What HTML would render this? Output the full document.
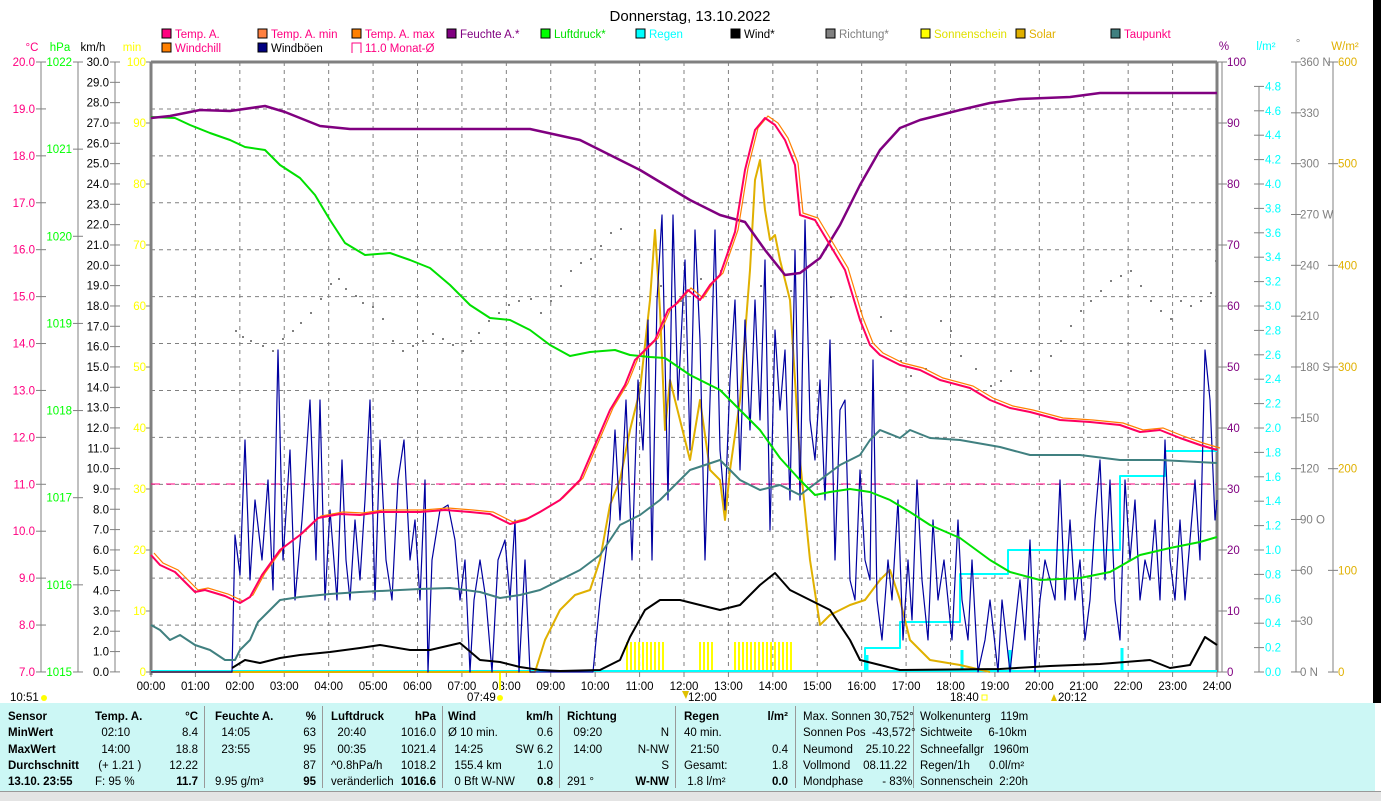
<!DOCTYPE html>
<html><head><meta charset="utf-8">
<style>
html,body{margin:0;padding:0;background:#fff;width:1381px;height:800px;overflow:hidden;font-family:"Liberation Sans",sans-serif}
svg{position:absolute;left:0;top:0}
text{font-family:"Liberation Sans",sans-serif;font-size:11.5px}
.tb{position:absolute;left:0;top:703px;width:1375px;height:88px;background:#ccf7f5}
.c{position:absolute;top:6px;font-size:11.5px;line-height:16.3px;color:#000;white-space:pre}
.sep{position:absolute;top:3px;width:1px;height:82px;background:#999}
.r{text-align:right}
b{font-weight:bold}
</style></head><body>
<svg id="s" width="1381" height="800" viewBox="0 0 1381 800"></svg>
<div class="tb">
 <div class="c" style="left:8px"><b>Sensor
MinWert
MaxWert
Durchschnitt
13.10. 23:55</b></div>
 <div class="sep" style="left:204px"></div>
 <div class="c" style="left:95px"><b>Temp. A.</b>
  02:10
  14:00
 (+ 1.21 )
F: 95 %</div>
 <div class="c r" style="left:160px;width:38px"><b>°C</b>
8.4
18.8
12.22
<b>11.7</b></div>
 <div class="sep" style="left:322px"></div>
 <div class="c" style="left:215px"><b>Feuchte A.</b>
  14:05
  23:55

9.95 g/m³</div>
 <div class="c r" style="left:280px;width:36px"><b>%</b>
63
95
87
<b>95</b></div>
 <div class="sep" style="left:442px"></div>
 <div class="c" style="left:331px"><b>Luftdruck</b>
  20:40
  00:35
^0.8hPa/h
veränderlich</div>
 <div class="c r" style="left:390px;width:46px"><b>hPa</b>
1016.0
1021.4
1018.2
<b>1016.6</b></div>
 <div class="sep" style="left:559px"></div>
 <div class="c" style="left:448px"><b>Wind</b>
Ø 10 min.
  14:25
  155.4 km
  0 Bft W-NW</div>
 <div class="c r" style="left:500px;width:53px"><b>km/h</b>
0.6
SW 6.2
1.0
<b>0.8</b></div>
 <div class="sep" style="left:675px"></div>
 <div class="c" style="left:567px"><b>Richtung</b>
  09:20
  14:00

291 °</div>
 <div class="c r" style="left:620px;width:49px"><b>&nbsp;</b>
N
N-NW
S
<b>W-NW</b></div>
 <div class="sep" style="left:795px"></div>
 <div class="c" style="left:684px"><b>Regen</b>
40 min.
  21:50
Gesamt:
 1.8 l/m²</div>
 <div class="c r" style="left:740px;width:48px"><b>l/m²</b>

0.4
1.8
<b>0.0</b></div>
 <div class="sep" style="left:913px"></div>
 <div class="c" style="left:803px">Max. Sonnen 30,752°
Sonnen Pos  -43,572°
Neumond    25.10.22
Vollmond    08.11.22
Mondphase      - 83%</div>
 <div class="c" style="left:920px">Wolkenunterg   119m
Sichtweite     6-10km
Schneefallgr   1960m
Regen/1h      0.0l/m²
Sonnenschein  2:20h</div>
</div>
<div style="position:absolute;left:0;top:791px;width:1381px;height:9px;background:#e4e4e4;border-top:1px solid #999"></div>
<div style="position:absolute;left:1373px;top:0;width:8px;height:703px;background:#000"></div>
<script>
var s=document.getElementById('s'),NS='http://www.w3.org/2000/svg',h='';
function T(x,y,t,c,a,extra){h+='<text x="'+x+'" y="'+y+'" fill="'+c+'"'+(a?' text-anchor="'+a+'"':'')+(extra||'')+'>'+t+'</text>';}
function L(x1,y1,x2,y2,c,w,d){h+='<line x1="'+x1+'" y1="'+y1+'" x2="'+x2+'" y2="'+y2+'" stroke="'+c+'" stroke-width="'+(w||1)+'"'+(d?' stroke-dasharray="'+d+'"':'')+'/>';}
function P(pts,c,w){h+='<polyline fill="none" stroke="'+c+'" stroke-width="'+w+'" stroke-linejoin="round" points="'+pts+'"/>';}
var X0=151,X1=1217,Y0=62,Y1=672;
T(690,21,'Donnerstag, 13.10.2022','#000','middle',' style="font-size:15px"');
// grid
for(var i=1;i<24;i++){var x=X0+i*(X1-X0)/24;L(x,Y0,x,Y1,'#808080',1,'4,4');}
for(var i=1;i<13;i++){var y=Y1-i*46.92;L(X0,y,X1,y,'#808080',1,'4,4');}
L(X0,Y0,X1,Y0,'#808080',3);L(X0,Y0,X0,Y1+3,'#808080',3);L(X1,Y0,X1,Y1,'#808080',3);L(X0,Y1,X1,Y1,'#808080',1);
// left axes
T(32,51,'°C','#ff0080','middle');T(60,51,'hPa','#00ff00','middle');T(93,51,'km/h','#000','middle');T(132,51,'min','#ffff00','middle');
L(41,62,41,672,'#808080');L(78,62,78,672,'#808080');L(115,62,115,672,'#808080');
for(var i=0;i<=13;i++){var y=62+i*46.92;T(35,y+4,(20-i).toFixed(1),'#ff0080','end');L(36,y,46,y,'#808080');}
for(var i=0;i<=7;i++){var y=62+i*87.14;T(72,y+4,1022-i,'#00ff00','end');L(73,y,83,y,'#808080');}
for(var i=0;i<=30;i++){var y=62+i*20.33;T(109,y+4,(30-i).toFixed(1),'#000','end');L(110,y,120,y,'#808080');}
for(var i=0;i<=10;i++){var y=62+i*61;T(146,y+4,100-i*10,'#ffff00','end');L(146,y,151,y,'#808080');}
// right axes
T(1224,50,'%','#800080','middle');T(1266,50,'l/m²','#00ffff','middle');T(1298,47,'°','#808080','middle');T(1345,50,'W/m²','#e0b000','middle');
L(1222,62,1222,672,'#808080');L(1259,86,1259,672,'#808080');L(1296,62,1296,672,'#808080');L(1333,62,1333,672,'#808080');
for(var i=0;i<=10;i++){var y=62+i*61;T(1227,y+4,100-i*10,'#800080');L(1217,y,1227,y,'#808080');}
for(var i=0;i<=24;i++){var v=4.8-i*0.2,y=672-v*122;T(1265,y+4,Math.abs(v).toFixed(1),'#00ffff');L(1254,y,1264,y,'#808080');}
var dl=['360 N','330','300','270 W','240','210','180 S','150','120','90  O','60','30','0   N'];
for(var i=0;i<=12;i++){var y=62+i*50.83;T(1300,y+4,dl[i],'#808080');L(1291,y,1301,y,'#808080');}
for(var i=0;i<=6;i++){var y=62+i*101.67;T(1338,y+4,600-i*100,'#e0b000');L(1328,y,1338,y,'#808080');}
// x labels
for(var i=0;i<=24;i++){var x=X0+i*(X1-X0)/24;T(x,690,(i<10?'0':'')+i+':00','#000','middle');L(x,672,x,677,'#808080');}
T(10,701,'10:51','#000');h+='<circle cx="44" cy="698" r="3" fill="#ffff00"/>';
T(467,701,'07:49','#000');h+='<circle cx="500" cy="698" r="3" fill="#ffff00"/>';L(500,672,500,690,'#ffff00',2);
T(688,701,'12:00','#000');h+='<path d="M682 691 L686 699 L689 691Z" fill="#e0c000"/>';
T(950,701,'18:40','#000');h+='<rect x="982" y="695" width="5" height="5" fill="none" stroke="#ffff00"/>';
T(1058,701,'20:12','#000');h+='<path d="M1051 701 L1054 694 L1057 701Z" fill="#e0c000"/>';
// legend
var lg=[[162,38,'#ff0080','Temp. A.','#ff0080'],[258,38,'#ff8040','Temp. A. min','#ff0080'],[352,38,'#ff8000','Temp. A. max','#ff0080'],[447,38,'#800080','Feuchte A.*','#800080'],[541,38,'#00ff00','Luftdruck*','#00e000'],[636,38,'#00ffff','Regen','#00ffff'],[731,38,'#000','Wind*','#000'],[826,38,'#808080','Richtung*','#808080'],[921,38,'#ffff00','Sonnenschein','#e0e000'],[1016,38,'#e0b000','Solar','#e0b000'],[1111,38,'#408080','Taupunkt','#ff0080'],[162,52,'#ff8000','Windchill','#ff0080'],[258,52,'#000080','Windböen','#000']];
lg.forEach(function(l){h+='<rect x="'+l[0]+'" y="'+(l[1]-9)+'" width="9" height="9" fill="'+l[2]+'" stroke="#000"/>';T(l[0]+13,l[1],l[3],l[4]);});
h+='<path d="M352 53 V43 H361 V53" fill="none" stroke="#ff0080"/>';T(365,52,'11.0 Monat-Ø','#ff0080');
// month avg
L(X0,484,X1,484,'#ff0080',1,'9,6');
// direction dots
var dd=[235,330,242,336,250,340,262,345,272,350,282,338,292,330,300,322,310,312,320,298,330,283,338,278,345,288,355,295,362,302,372,306,382,318,392,340,402,350,412,345,422,340,432,333,442,338,452,344,462,350,470,340,478,332,488,320,498,312,508,304,518,300,530,298,540,312,550,300,560,285,570,270,580,262,590,258,600,245,610,232,620,228,660,285,680,300,700,278,720,270,760,285,790,290,830,296,860,310,880,316,890,330,900,360,910,375,925,368,940,320,950,330,960,355,975,368,990,385,1000,380,1010,370,1030,370,1050,355,1060,340,1070,325,1080,310,1090,300,1100,290,1110,280,1120,275,1130,270,1140,285,1150,300,1160,310,1170,318,1180,300,1190,305,1200,300,1210,292,1215,260];
for(var i=0;i<dd.length;i+=2)h+='<rect x="'+dd[i]+'" y="'+dd[i+1]+'" width="2" height="2" fill="#808080"/>';
// sunshine bars
[[627,666],[700,713],[735,791]].forEach(function(r){for(var x=r[0];x<=r[1];x+=4)L(x,642,x,672,'#ffff00',2);});
// rain
P('865,672 865,648 900,648 900,622 960,622 960,574 1008,574 1008,550 1120,550 1120,476 1165,476 1165,451 1217,451','#00ffff',2);
L(1010,650,1010,672,'#00ffff',3);L(1122,648,1122,672,'#00ffff',3);L(962,650,962,672,'#00ffff',3);L(867,655,867,672,'#00ffff',3);
L(X0,671,X1,671,'#00ffff',2);
// solar
P('151,672 535,672 545,640 560,610 575,595 590,590 600,560 610,505 620,480 630,430 640,390 650,300 655,230 660,310 665,430 670,380 680,420 690,460 700,400 710,470 720,480 725,520 730,470 740,400 750,270 755,180 760,160 765,210 770,240 775,235 780,260 790,300 800,460 810,560 820,625 830,615 850,605 865,600 880,580 890,570 900,600 910,640 930,660 960,665 990,672','#e0b000',2);
// gusts
P('151,672 232,672 235,535 240,575 245,440 250,580 255,500 262,560 268,480 273,590 278,350 283,560 290,450 295,600 302,520 310,400 316,560 320,400 325,600 330,510 337,600 342,460 346,560 350,600 355,520 360,580 365,500 370,400 375,600 380,440 386,560 392,600 398,480 404,440 410,560 415,520 420,600 425,480 428,672 432,560 440,510 448,505 455,540 460,600 465,560 470,672 474,600 480,560 486,600 492,672 498,560 505,540 510,600 515,520 519,672 525,560 530,672 593,672 600,600 610,520 615,430 620,520 626,400 632,560 638,380 643,450 648,320 652,560 657,300 662,215 668,500 673,215 678,400 685,260 690,450 695,230 700,340 705,560 710,400 715,230 720,450 725,510 730,380 735,300 740,470 745,320 750,430 755,300 760,420 765,260 770,530 775,330 780,410 785,350 790,500 795,250 800,500 805,220 810,420 815,460 820,380 825,500 830,340 835,560 840,410 845,400 850,580 855,600 860,470 865,560 870,580 873,360 877,600 882,640 888,560 892,600 898,500 903,640 908,560 912,620 917,480 922,580 928,640 933,520 938,600 944,560 948,600 952,640 958,520 962,600 968,640 972,560 978,672 985,640 990,600 998,672 1002,600 1010,672 1020,580 1025,640 1030,540 1035,672 1040,600 1045,560 1050,580 1055,600 1060,480 1065,600 1070,520 1075,600 1080,560 1085,640 1090,600 1095,520 1100,460 1105,580 1110,480 1115,600 1120,640 1125,480 1130,560 1135,500 1140,600 1145,560 1150,580 1155,520 1160,600 1165,440 1170,560 1175,600 1180,520 1185,600 1190,540 1195,480 1200,560 1205,350 1210,400 1215,520 1217,500','#0000a0',1.2);
// dew point
P('151,625 160,630 170,640 180,635 195,645 210,650 225,660 235,660 240,650 250,640 258,622 270,610 280,600 300,597 330,594 360,592 400,590 420,589 450,588 480,592 500,598 520,595 540,590 560,580 580,570 600,555 620,525 640,515 660,500 690,470 720,460 740,480 760,490 780,485 800,495 820,480 840,465 860,455 870,440 880,430 900,438 910,430 930,438 960,440 1000,447 1030,455 1080,455 1120,460 1160,460 1217,463','#408080',2);
// wind
P('232,668 245,660 260,663 280,658 300,655 330,652 360,648 380,645 410,650 430,650 460,643 480,660 500,662 520,667 540,670 560,671 600,670 620,660 630,637 645,610 660,600 680,600 700,605 720,610 740,605 760,585 775,573 790,590 810,600 830,610 850,640 860,660 880,665 900,670 1000,669 1050,666 1100,664 1150,660 1170,668 1190,665 1205,637 1217,645','#000',2);
// pressure
P('151,117 175,118 190,125 210,133 230,140 245,147 265,150 280,165 300,178 315,195 330,220 345,243 365,255 390,253 410,260 430,268 450,285 470,305 490,318 510,320 530,330 550,345 570,356 590,352 615,350 630,355 650,357 665,358 690,375 720,390 740,410 760,430 780,458 800,480 815,495 830,492 850,489 870,492 890,500 910,512 930,525 960,538 990,560 1010,572 1040,580 1080,578 1110,572 1140,555 1170,548 1200,542 1217,537','#00e000',2);
// humidity
P('151,118 170,116 200,110 230,111 265,106 285,112 300,118 320,126 350,129 450,129 530,129 580,140 610,155 640,170 665,185 690,200 720,215 745,222 765,250 785,275 800,273 820,258 840,225 860,185 880,150 900,128 920,120 960,110 990,103 1020,99 1070,97 1100,93 1217,93','#800080',2.5);
// temps
var tp='151,555 160,565 175,572 195,592 205,590 225,596 240,603 250,597 262,575 280,550 300,535 318,518 340,514 360,515 380,512 420,512 445,510 470,512 490,514 510,524 525,520 540,512 560,500 580,480 595,445 610,410 625,385 635,360 645,350 655,340 668,310 675,305 688,290 700,300 710,285 720,275 735,232 745,170 755,130 765,118 775,125 785,140 795,165 800,215 815,220 830,245 845,270 860,320 870,345 880,355 900,365 920,370 940,380 970,388 990,400 1010,408 1030,412 1060,420 1090,422 1120,425 1140,432 1160,430 1180,438 1200,445 1217,450';
h+='<polyline fill="none" stroke="#ff8000" stroke-width="1.2" transform="translate(3,-2)" points="'+tp+'"/>';
P(tp,'#ff0060',2);
s.innerHTML=h;
</script>
</body></html>
